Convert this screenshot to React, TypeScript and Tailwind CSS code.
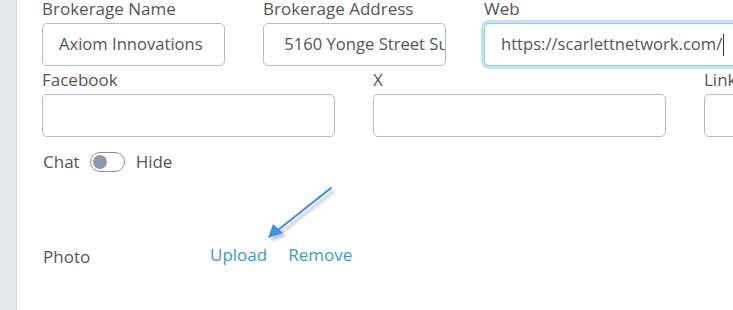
const font = { fontFamily: '"Open Sans", "Liberation Sans", sans-serif' };

function Field({ label, value, width, focused }: { label: string; value?: string; width: string; focused?: boolean }) {
  return (
    <div className={`flex flex-col ${width}`}>
      <label className="h-[28px] pt-[3px] text-[17px] leading-[22px] text-[#555] whitespace-nowrap">{label}</label>
      <div
        className={
          "flex h-[43px] items-center overflow-hidden whitespace-nowrap rounded-[5px] border bg-white px-[16px] text-[16.6px] text-[#555] " +
          (focused ? "border-[#8ccbe2] shadow-[0_0_0_3px_#bfe4f1]" : "border-[#b3bcc6]")
        }
      >
        {value}
        {focused ? <span className="ml-[1px] inline-block h-[22px] w-px bg-[#333]" /> : null}
      </div>
    </div>
  );
}

export default function App() {
  return (
    <div className="relative flex h-[310px] w-[733px] overflow-hidden bg-white" style={font}>
      <div className="w-[17px] shrink-0 border-r border-[#d3d5d8] bg-[#e6e7e9]" />
      <div className="-mt-[5px] flex flex-col pl-[25px]">
        <div className="flex gap-[38px]">
          <Field label="Brokerage Name" value="Axiom Innovations" width="w-[183px]" />
          <Field label="Brokerage Address" value={"\u00a05160 Yonge Street Suite 1200"} width="w-[183px]" />
          <Field label="Web" value="https://scarlettnetwork.com/" width="w-[280px]" focused />
        </div>
        <div className="flex gap-[38px]">
          <Field label="Facebook" width="w-[293px]" />
          <Field label="X" width="w-[293px]" />
          <Field label="LinkedIn" width="w-[293px]" />
        </div>
        <div className="mt-[12px] flex items-center text-[17px] text-[#555]">
          <span className="pl-px">Chat</span>
          <span className="ml-[10px] flex h-[20px] w-[35px] items-center rounded-full border border-[#8a8f96] bg-white px-[2px]">
            <span className="h-[14px] w-[14px] rounded-full bg-[#8d99a6]" />
          </span>
          <span className="ml-[11px]">Hide</span>
        </div>
        <div className="mt-[66px] flex items-center text-[17px]">
          <span className="w-[168px] pl-px pt-[3px] text-[#555]">Photo</span>
          <span className="text-[#3a9bc8]">Upload</span>
          <span className="ml-[21px] text-[#3a9bc8]">Remove</span>
        </div>
      </div>
      <svg className="absolute left-[260px] top-[180px]" width="80" height="66" viewBox="0 0 80 66">
        <defs>
          <filter id="sh" x="-20%" y="-20%" width="140%" height="140%">
            <feGaussianBlur stdDeviation="1.5" />
          </filter>
        </defs>
        <g transform="translate(3 3)" opacity="0.35" filter="url(#sh)">
          <line x1="71" y1="8" x2="18" y2="50" stroke="#555" strokeWidth="2.5" />
          <polygon points="8,58 13,44 23,53" fill="#555" />
        </g>
        <line x1="71" y1="8" x2="18" y2="50" stroke="#3d8ef5" strokeWidth="2.2" strokeLinecap="round" />
        <polygon points="8,58 13,44 23,53" fill="#3d8ef5" />
      </svg>
    </div>
  );
}
